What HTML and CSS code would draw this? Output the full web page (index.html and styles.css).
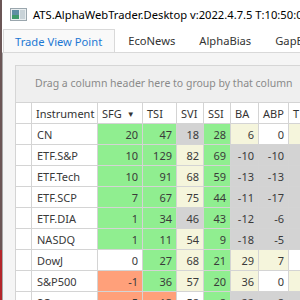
FILE: index.html
```html
<!DOCTYPE html>
<html lang="en">
<head>
  <meta charset="UTF-8">
  <title>ATS.AlphaWebTrader.Desktop</title>
  <link rel="stylesheet" href="styles.css">
</head>
<body>
  <div class="frame">
    <div class="frame-edge"></div>
    <div class="window">
      <header class="titlebar">
        <svg class="titlebar__icon" width="17" height="13" viewBox="0 0 17 13">
          <rect x="0.5" y="0.5" width="16" height="12" fill="#e9eef0" stroke="#9aa6ad"/>
          <rect x="2" y="2" width="7" height="9" fill="#5f8fa3"/>
          <rect x="2" y="7" width="7" height="4" fill="#3f9a6a"/>
          <rect x="10" y="2" width="5" height="9" fill="#c9d3d8"/>
        </svg>
        <span class="titlebar__text">ATS.AlphaWebTrader.Desktop v:2022.4.7.5 T:10:50:02</span>
      </header>

      <nav class="tabs">
        <div class="tab tab--active">Trade View Point</div>
        <div class="tab">EcoNews</div>
        <div class="tab">AlphaBias</div>
        <div class="tab">GapBias</div>
      </nav>

      <main class="tab-content">
        <div class="group-panel">Drag a column header here to group by that column</div>
        <table class="grid">
          <colgroup>
            <col class="c-ind"><col class="c-inst"><col class="c-sfg"><col class="c-tsi">
            <col class="c-svi"><col class="c-ssi"><col class="c-ba"><col class="c-abp"><col class="c-t">
          </colgroup>
          <thead>
            <tr>
              <th></th><th>Instrument</th><th>SFG <span class="sort">&#9660;</span></th><th>TSI</th>
              <th>SVI</th><th>SSI</th><th>BA</th><th>ABP</th><th>T</th>
            </tr>
          </thead>
          <tbody>
            <tr><td></td><td class="name">CN</td><td class="g">20</td><td class="g">47</td><td class="s">18</td><td class="g">28</td><td class="b">6</td><td class="w">0</td><td class="b"></td></tr>
            <tr><td></td><td class="name">ETF.S&amp;P</td><td class="g">10</td><td class="g">129</td><td class="b">82</td><td class="g">69</td><td class="s">-10</td><td class="s">-10</td><td class="s"></td></tr>
            <tr><td></td><td class="name">ETF.Tech</td><td class="g">10</td><td class="g">91</td><td class="b">68</td><td class="g">59</td><td class="s">-13</td><td class="s">-13</td><td class="s"></td></tr>
            <tr><td></td><td class="name">ETF.SCP</td><td class="g">7</td><td class="g">67</td><td class="b">75</td><td class="g">44</td><td class="s">-11</td><td class="s">-17</td><td class="s"></td></tr>
            <tr><td></td><td class="name">ETF.DIA</td><td class="g">1</td><td class="g">34</td><td class="s">46</td><td class="g">43</td><td class="s">-12</td><td class="s">-6</td><td class="s"></td></tr>
            <tr><td></td><td class="name">NASDQ</td><td class="g">1</td><td class="g">11</td><td class="b">54</td><td class="g">9</td><td class="s">-18</td><td class="s">-5</td><td class="s"></td></tr>
            <tr><td></td><td class="name">DowJ</td><td class="w">0</td><td class="g">27</td><td class="b">68</td><td class="g">21</td><td class="b">29</td><td class="b">7</td><td class="w"></td></tr>
            <tr><td></td><td class="name">S&amp;P500</td><td class="r">-1</td><td class="g">36</td><td class="b">57</td><td class="g">20</td><td class="b">36</td><td class="w">0</td><td class="b"></td></tr>
            <tr><td></td><td class="name">SC</td><td class="r">-5</td><td class="r">13</td><td class="w">58</td><td class="g">8</td><td class="s">22</td><td class="s">8</td><td class="s"></td></tr>
          </tbody>
        </table>
      </main>
    </div>
  </div>
</body>
</html>
```

FILE: styles.css
```css
/* Root resets */
* { margin: 0; padding: 0; box-sizing: border-box; }
html, body { width: 300px; height: 300px; overflow: hidden; }
body { font-family: 'Noto Sans', 'Open Sans', sans-serif; font-size: 11px; background-color: #ffffff; color: #333333; }

/* Outer frame */
.frame { display: flex; height: 300px; }
.frame-edge { width: 2px; flex: none; background: linear-gradient(to bottom, #6b5656 0, #6b5656 250px, #b3262a 250px); }
.window { flex: 1; display: flex; flex-direction: column; min-width: 0; }

/* Title bar */
.titlebar { height: 29px; display: flex; align-items: center; gap: 6px; padding-left: 8px; white-space: nowrap; overflow: hidden; }
.titlebar__icon { flex: none; }
.titlebar__text { color: #000000; font-size: 11.2px; }

/* Tabs */
.tabs { display: flex; height: 24px; border-bottom: 1px solid #d9d9d9; padding-left: 1px; white-space: nowrap; overflow: hidden; }
.tab { padding: 4px 12px 0 12px; color: #333333; font-size: 11.2px; }
.tab--active { color: #1c78d4; border: 1px solid #d9d9d9; border-bottom: none; background-color: #f9f9f9; margin-bottom: -1px; padding-left: 11px; padding-right: 12px; }
.tab--active + .tab { padding-left: 13px; }

/* Content */
.tab-content { flex: 1; background-color: #f5f5f5; border-left: 1px solid #a8a8a8; padding: 12px 0 0 12px; overflow: hidden; }
.group-panel {
  height: 37px;
  background-color: #efefef;
  border-top: 1px solid #d6d6d6;
  border-left: 1px solid #d6d6d6;
  color: #8a8a8a;
  font-size: 10.5px;
  padding: 10px 0 0 19px;
  white-space: nowrap;
  overflow: hidden;
}

/* Grid */
.grid { border-collapse: collapse; table-layout: fixed; width: 330px; background-color: #ffffff; }
.c-ind { width: 16px; }
.c-inst { width: 66px; }
.c-sfg { width: 45px; }
.c-tsi { width: 34px; }
.c-svi { width: 27px; }
.c-ssi { width: 27px; }
.c-ba { width: 28px; }
.c-abp { width: 30px; }
.c-t { width: 57px; }

.grid th, .grid td { border: 1px solid #d4d4d4; height: 21px; padding: 0 4px; white-space: nowrap; overflow: hidden; }
.grid th { text-align: left; font-weight: normal; color: #333333; padding-top: 1px; }
.grid td { text-align: right; color: #3a3a3a; }
.grid td.name { text-align: left; padding-left: 5px; }
.sort { font-size: 8px; vertical-align: 1px; margin-left: 2px; }

/* Cell states */
.g { background-color: #90ee90; }
.b { background-color: #f5f5dc; }
.s { background-color: #d3d3d3; }
.r { background-color: #ffa07a; }
.w { background-color: #ffffff; }
```
